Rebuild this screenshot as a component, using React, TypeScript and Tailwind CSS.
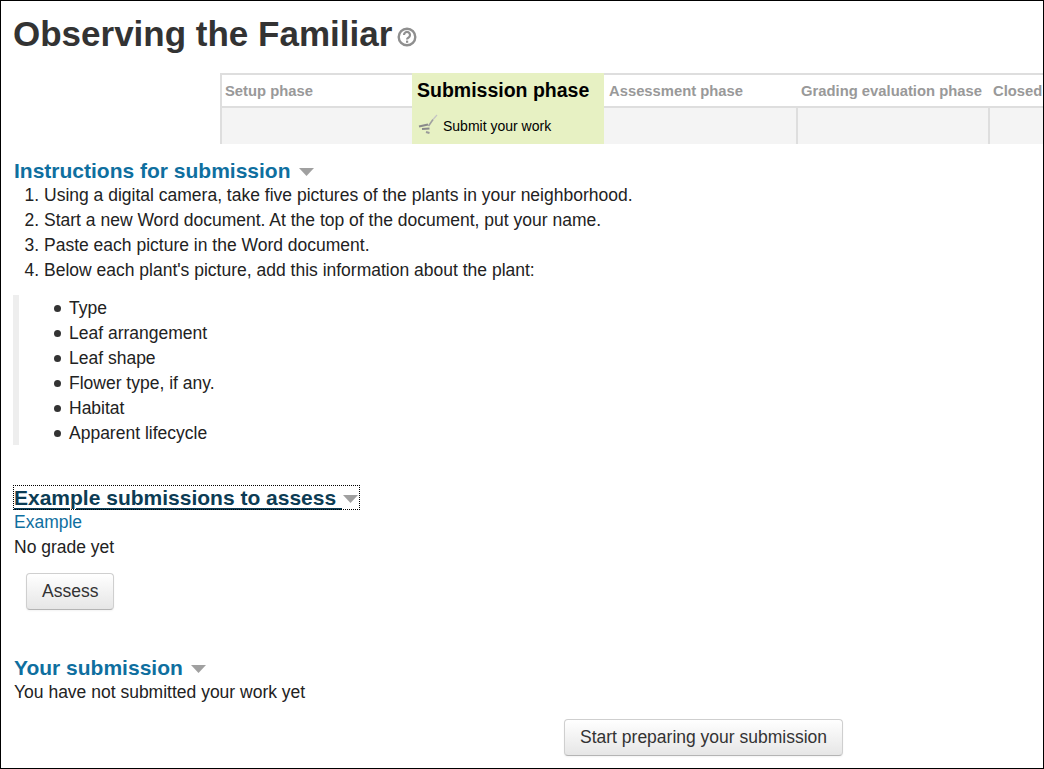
import React from 'react';

const PHASES = [
  { name: 'Setup phase' },
  { name: 'Submission phase', active: true, task: 'Submit your work' },
  { name: 'Assessment phase' },
  { name: 'Grading evaluation phase' },
  { name: 'Closed' },
];

const STEPS = [
  'Using a digital camera, take five pictures of the plants in your neighborhood.',
  'Start a new Word document. At the top of the document, put your name.',
  'Paste each picture in the Word document.',
  "Below each plant's picture, add this information about the plant:",
];

const DETAILS = ['Type', 'Leaf arrangement', 'Leaf shape', 'Flower type, if any.', 'Habitat', 'Apparent lifecycle'];

const Caret = ({ className = '' }: { className?: string }) => (
  <svg width="15" height="8" viewBox="0 0 15 8" className={`shrink-0 ${className}`}>
    <path d="M0 0H15L7.5 8Z" fill="#a0a0a0" />
  </svg>
);

const Button = ({ label, className = '' }: { label: string; className?: string }) => (
  <button className={`block h-[37px] rounded-[4px] border border-[#cfcfcf] border-b-[#b4b4b4] bg-gradient-to-b from-white to-[#e6e6e6] px-[15px] text-[17.5px] text-[#333] shadow-[0_1px_2px_rgba(0,0,0,0.05)] ${className}`}>
    {label}
  </button>
);

const TaskIcon = () => (
  <svg width="20" height="20" viewBox="0 0 20 20" fill="none" className="mt-[-5px] shrink-0">
    <path d="M1 12.5L10 10.5" stroke="#8a8a8a" strokeWidth="2.2" />
    <path d="M4 15L11.5 14.5" stroke="#8a8a8a" strokeWidth="2" />
    <path d="M8 18L11.5 19" stroke="#9a9a9a" strokeWidth="2" />
    <path d="M10.5 12L15 5.5" stroke="#a0a0a0" strokeWidth="1.6" />
    <path d="M15 5.5L19 1" stroke="#c4c4c4" strokeWidth="1.2" />
  </svg>
);

export default function App() {
  return (
    <div className="h-[769px] overflow-hidden border border-black bg-white pl-[13px] font-['Liberation_Sans',Arial,sans-serif] text-[17.5px] leading-[25px] text-[#333]">
      <div className="flex h-[72px] items-start pt-[11px]">
        <h1 className="-ml-px text-[35px] font-bold leading-[44px] text-[#333]">Observing the Familiar</h1>
        <svg width="20" height="20" viewBox="0 0 20 20" className="ml-[5px] mt-[15px]">
          <circle cx="10" cy="10" r="8.3" fill="none" stroke="#8f8f8f" strokeWidth="2.4" />
          <path d="M7 8a3 3 0 1 1 4.6 2.5c-1 .6-1.6 1-1.6 2" fill="none" stroke="#8f8f8f" strokeWidth="2.2" />
          <rect x="9" y="13.6" width="2.2" height="2.2" fill="#8f8f8f" />
        </svg>
      </div>

      <div className="ml-[206px] flex h-[71px] overflow-hidden">
        {PHASES.map((phase, i) => (
          <div key={phase.name} className={`flex shrink-0 flex-col ${i === 4 ? 'w-[60px]' : 'w-[192px]'}`}>
            <div className={`flex h-[35px] items-center whitespace-nowrap ${phase.active ? 'bg-[#e7f1c3] pb-[1px] pl-[5px] text-[19.5px] font-bold text-black' : 'border-y-2 border-[#dedede] pt-[1px] text-[14.8px] font-bold text-[#999]'} ${i === 0 ? 'border-l-2 pl-[3px]' : 'pl-[5px]'}`}>
              {phase.name}
            </div>
            <div className={`flex flex-1 items-center gap-[5px] pl-[6px] ${phase.active ? 'bg-[#e7f1c3] text-[14px] text-black' : 'border-[#dedede] bg-[#f4f4f4]'} ${i === 2 || phase.active ? '' : 'border-l-2'}`}>
              {phase.task && <TaskIcon />}
              {phase.task}
            </div>
          </div>
        ))}
      </div>

      <h3 className="mt-[15px] flex h-[24px] items-center pb-[2px] text-[21px] font-bold text-[#0f6f9f]">
        Instructions for submission
        <Caret className="ml-[8px] mt-[4px]" />
      </h3>
      <ol className="ml-[30px] list-decimal text-[#222]">
        {STEPS.map(step => <li key={step}>{step}</li>)}
      </ol>
      <ul className="-ml-px mt-[12px] h-[150px] border-l-[6px] border-[#eeeeee] pl-[35px] pt-px text-[#222]">
        {DETAILS.map(item => (
          <li key={item} className="flex items-center gap-[8px]">
            <span className="size-[7px] rounded-full bg-[#333]" />
            {item}
          </li>
        ))}
      </ul>

      <h3 className="mt-[41px] flex h-[23px] w-[345px] items-center whitespace-nowrap text-[21px] font-bold text-[#0c3c54] outline-1 outline-dotted outline-black">
        <span className="underline decoration-2 underline-offset-[3px]">Example submissions to assess&nbsp;</span>
        <Caret className="ml-[1px] mt-[2px]" />
      </h3>
      <a className="mt-px block text-[#0f6f9f]">Example</a>
      <p className="text-[#222]">No grade yet</p>
      <Button label="Assess" className="ml-[12px] mt-[13px]" />

      <h3 className="mt-[46px] flex h-[24px] items-center pb-[2px] text-[21px] font-bold text-[#0f6f9f]">
        Your submission
        <Caret className="ml-[8px] mt-[4px]" />
      </h3>
      <p className="text-[#222]">You have not submitted your work yet</p>
      <Button label="Start preparing your submission" className="ml-[550px] mt-[14px]" />
    </div>
  );
}
